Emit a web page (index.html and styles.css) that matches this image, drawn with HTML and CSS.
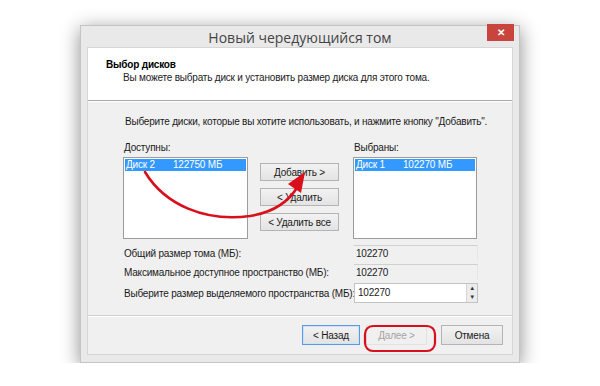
FILE: index.html
```html
<!DOCTYPE html>
<html lang="ru">
<head>
  <meta charset="UTF-8">
  <title>Новый чередующийся том</title>
  <link rel="stylesheet" href="styles.css">
</head>
<body>
  <div class="window">
    <div class="titlebar">
      <span class="title">Новый чередующийся том</span>
      <span class="close">&#x2715;</span>
    </div>

    <div class="client">
      <!-- Header -->
      <div class="header">
        <div class="header-title">Выбор дисков</div>
        <div class="header-sub">Вы можете выбрать диск и установить размер диска для этого тома.</div>
      </div>

      <!-- Main content -->
      <div class="content">
        <p class="hint">Выберите диски, которые вы хотите использовать, и нажмите кнопку "Добавить".</p>

        <div class="lists">
          <div class="list-col">
            <label>Доступны:</label>
            <div class="listbox">
              <div class="item selected"><span class="disk">Диск 2</span>122750 МБ</div>
            </div>
          </div>
          <div class="list-buttons">
            <button>Добавить &gt;</button>
            <button>&lt; Удалить</button>
            <button>&lt; Удалить все</button>
          </div>
          <div class="list-col">
            <label>Выбраны:</label>
            <div class="listbox">
              <div class="item selected"><span class="disk">Диск 1</span>102270 МБ</div>
            </div>
          </div>
        </div>

        <div class="rows">
          <div class="row">
            <span class="row-label">Общий размер тома (МБ):</span>
            <span class="value">102270</span>
          </div>
          <div class="row">
            <span class="row-label">Максимальное доступное пространство (МБ):</span>
            <span class="value">102270</span>
          </div>
          <div class="row">
            <span class="row-label">Выберите размер выделяемого пространства (МБ):</span>
            <span class="spin">
              <span class="spin-text">102270</span>
              <span class="spin-arrows">
                <span class="arrow">&#9650;</span>
                <span class="arrow">&#9660;</span>
              </span>
            </span>
          </div>
        </div>
      </div>

      <!-- Footer buttons -->
      <div class="footer">
        <button class="default">&lt; Назад</button>
        <button class="disabled">Далее &gt;</button>
        <button class="cancel">Отмена</button>
      </div>
    </div>

    <!-- Red annotations drawn over the dialog -->
    <svg class="marks" width="440" height="338" viewBox="80 25 440 338">
      <path d="M145,172 C165,205 205,222 250,216 C275,212 290,200 298,186" fill="none" stroke="#d8101c" stroke-width="2.6" stroke-linecap="round"/>
      <polygon points="305,172 288,184 301,193" fill="#d8101c"/>
      <rect x="365" y="326" width="70" height="25" rx="8" ry="8" fill="none" stroke="#d8101c" stroke-width="2.2"/>
    </svg>
  </div>
</body>
</html>
```

FILE: styles.css
```css
* {
  margin: 0;
  padding: 0;
  box-sizing: border-box;
}

body {
  background: #fff;
  font-family: 'Liberation Sans', Arial, sans-serif;
  font-size: 10px;
  letter-spacing: -0.2px;
  color: #1a1a1a;
  padding: 25px 0 0 80px;
}

.window {
  position: relative;
  width: 440px;
  height: 338px;
  background: #e9e9e9;
  border: 1px solid #c4c4c4;
  box-shadow: 0 4px 18px rgba(0, 0, 0, 0.45);
  padding: 0 6px 7px 6px;
  display: flex;
  flex-direction: column;
}

.titlebar {
  height: 21px;
  display: flex;
  justify-content: center;
  align-items: center;
  position: relative;
}

.title {
  font-family: 'Open Sans', sans-serif;
  font-size: 14px;
  letter-spacing: 0;
  color: #444;
  margin-top: 2px;
}

.close {
  position: absolute;
  top: -2px;
  right: -1px;
  width: 27px;
  height: 17px;
  background: #c9443d;
  color: #fff;
  font-size: 10px;
  font-weight: bold;
  display: flex;
  justify-content: center;
  align-items: center;
}

.client {
  flex: 1;
  display: flex;
  flex-direction: column;
  background: #f0f0f0;
  border: 1px solid #d6d6d6;
}

/* Header */
.header {
  height: 53px;
  background: #fff;
  border-bottom: 1px solid #a8a8a8;
  box-shadow: 0 1px 0 #fff;
  padding: 11px 0 0 18px;
}

.header-title {
  font-weight: bold;
  color: #000;
}

.header-sub {
  margin: 2px 0 0 17px;
  color: #222;
}

/* Content */
.content {
  flex: 1;
  padding: 15px 0 0 35px;
}

.hint {
  margin-left: 2px;
  height: 26px;
  white-space: nowrap;
}

.lists {
  display: flex;
}

.list-col {
  display: flex;
  flex-direction: column;
}

.list-col label {
  margin-left: 1px;
  height: 11px;
  line-height: 11px;
}

.listbox {
  width: 125px;
  height: 82px;
  margin-top: 4px;
  background: #fff;
  border: 1px solid #9c9c9c;
  padding: 1px;
}

.list-col:last-child .listbox {
  width: 124px;
}

.item {
  height: 12px;
  line-height: 12px;
  padding-left: 1px;
  white-space: nowrap;
}

.item.selected {
  background: #3399ff;
  color: #fff;
}

.disk {
  display: inline-block;
  width: 47px;
}

.list-buttons {
  display: flex;
  flex-direction: column;
  gap: 7px;
  margin: 21px 14px 0 12px;
}

button {
  width: 79px;
  height: 18px;
  font-family: 'Liberation Sans', Arial, sans-serif;
  font-size: 10px;
  letter-spacing: -0.2px;
  color: #1a1a1a;
  background: linear-gradient(#f2f2f2, #e3e3e3);
  border: 1px solid #b4b4b4;
}

/* Size rows */
.rows {
  margin-top: 6px;
  display: flex;
  flex-direction: column;
  gap: 3px;
}

.row {
  display: flex;
  align-items: center;
  height: 16px;
}

.row:last-child {
  height: 20px;
}

.row-label {
  width: 230px;
  margin-left: 1px;
  white-space: nowrap;
}

.value {
  width: 124px;
  height: 16px;
  line-height: 15px;
  padding-left: 2px;
  border-top: 1px solid #d0d0d0;
  border-right: 1px solid #e6e6e6;
  color: #222;
}

.spin {
  width: 124px;
  height: 20px;
  display: flex;
  background: #fff;
  border: 1px solid #c2c2c2;
}

.spin-text {
  flex: 1;
  line-height: 18px;
  padding-left: 3px;
}

.spin-arrows {
  width: 11px;
  display: flex;
  flex-direction: column;
  border-left: 1px solid #d6d6d6;
  background: #ececec;
}

.arrow {
  flex: 1;
  font-size: 6px;
  line-height: 9px;
  text-align: center;
  color: #333;
}

/* Footer */
.footer {
  height: 39px;
  border-top: 1px solid #d2d2d2;
  box-shadow: inset 0 1px 0 #fff;
  display: flex;
  justify-content: flex-end;
  align-items: center;
  padding-right: 9px;
}

.footer button {
  height: 20px;
  width: 58px;
}

.footer .default {
  border: 1px solid #5a9be0;
  box-shadow: inset 0 0 0 1px #cfe3f8;
  margin-right: 6px;
}

.footer .disabled {
  width: 61px;
  color: #a3a3a3;
  background: #f0f0f0;
  border-color: #e2e2e2;
  margin-right: 14px;
}

.footer .cancel {
  width: 62px;
}

.marks {
  position: absolute;
  left: -1px;
  top: -1px;
  pointer-events: none;
}
```
